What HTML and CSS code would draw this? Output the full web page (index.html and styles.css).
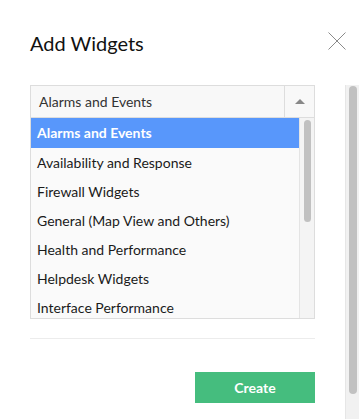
FILE: index.html
```html
<!DOCTYPE html>
<html lang="en">
<head>
    <meta charset="UTF-8">
    <meta name="viewport" content="width=device-width, initial-scale=1.0">
    <title>Add Widgets</title>
    <link rel="stylesheet" href="styles.css">
</head>
<body>
    <div class="modal">
        <div class="modal-header">
            <h1>Add Widgets</h1>
            <span class="close">
                <svg width="18" height="18" viewBox="0 0 18 18">
                    <path d="M0.5 0.5 L17.5 17.5 M17.5 0.5 L0.5 17.5" stroke="#8a8a8a" stroke-width="1" fill="none"/>
                </svg>
            </span>
        </div>

        <div class="modal-body">
            <div class="content">
                <div class="select">
                    <div class="select-head">
                        <span class="select-value">Alarms and Events</span>
                        <span class="select-arrow"><i></i></span>
                    </div>
                    <div class="select-drop">
                        <ul class="options">
                            <li class="active">Alarms and Events</li>
                            <li>Availability and Response</li>
                            <li>Firewall Widgets</li>
                            <li>General (Map View and Others)</li>
                            <li>Health and Performance</li>
                            <li>Helpdesk Widgets</li>
                            <li>Interface Performance</li>
                        </ul>
                        <div class="drop-scroll"><div class="thumb"></div></div>
                    </div>
                </div>

                <div class="divider"></div>

                <div class="actions">
                    <button type="button">Create</button>
                </div>
            </div>
            <div class="page-scroll"><div class="thumb"></div></div>
        </div>
    </div>
</body>
</html>
```

FILE: styles.css
```css
body {
    margin: 0;
    font-family: Lato, "Open Sans", sans-serif;
    background-color: #fff;
    color: #222;
}
.modal {
    width: 360px;
    height: 419px;
    overflow: hidden;
}
.modal-header {
    display: flex;
    justify-content: space-between;
    align-items: flex-start;
    height: 85px;
    padding: 0 14px 0 30px;
    box-sizing: border-box;
}
h1 {
    margin: 0;
    padding-top: 30px;
    font-size: 20px;
    font-weight: 400;
    line-height: 26px;
    color: #111;
}
.close {
    display: block;
    margin-top: 32px;
    width: 18px;
    height: 18px;
}
.close svg {
    display: block;
}
.modal-body {
    display: flex;
    height: 334px;
}
.content {
    width: 285px;
    margin-left: 30px;
    margin-right: 30px;
}
.select {
    border: 1px solid #ddd;
}
.select-head {
    display: flex;
    height: 31px;
    background-color: #f8f8f8;
    border-bottom: 1px solid #ddd;
}
.select-value {
    flex: 1;
    padding-left: 8px;
    font-size: 14px;
    line-height: 31px;
    color: #333;
}
.select-arrow {
    display: flex;
    align-items: center;
    justify-content: center;
    width: 29px;
    border-left: 1px solid #ddd;
}
.select-arrow i {
    display: block;
    width: 0;
    height: 0;
    border-left: 5px solid transparent;
    border-right: 5px solid transparent;
    border-bottom: 5px solid #888;
}
.select-drop {
    display: flex;
    height: 200px;
    overflow: hidden;
    background-color: #fafafa;
}
.options {
    flex: 1;
    list-style: none;
    margin: 0;
    padding: 0;
}
.options li {
    height: 29px;
    line-height: 29px;
    padding-left: 6px;
    font-size: 14px;
    color: #1a1a1a;
}
.options li.active {
    height: 30px;
    line-height: 29px;
    background-color: #5897fb;
    color: #fff;
    font-weight: 700;
}
.drop-scroll {
    width: 14px;
    background-color: #f4f4f4;
    border-left: 1px solid #e4e4e4;
    padding-top: 2px;
}
.drop-scroll .thumb {
    width: 7px;
    height: 102px;
    margin-left: 4px;
    background-color: #c1c1c1;
    border-radius: 4px;
}
.divider {
    height: 1px;
    margin-top: 19px;
    background-color: #ececec;
}
.actions {
    display: flex;
    justify-content: flex-end;
    margin-top: 33px;
}
button {
    width: 120px;
    height: 31px;
    padding: 0;
    border: none;
    background-color: #45bd7e;
    color: #fff;
    font-family: Lato, sans-serif;
    font-size: 14px;
    font-weight: 700;
}
.page-scroll {
    width: 14px;
    height: 334px;
    background-color: #f1f1f1;
    border-left: 1px solid #e6e6e6;
    padding-top: 1px;
    box-sizing: border-box;
}
.page-scroll .thumb {
    width: 8px;
    height: 308px;
    margin-left: 3px;
    background-color: #c1c1c1;
    border-radius: 4px;
}
```
